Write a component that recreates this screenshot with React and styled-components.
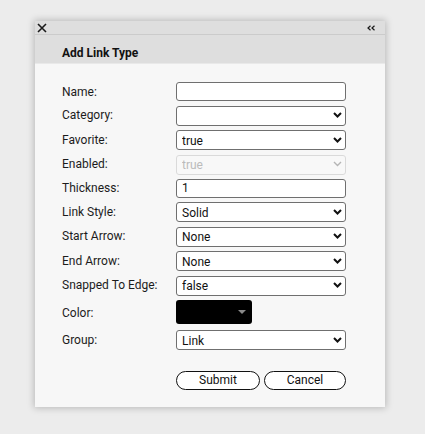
import React from "react";
import styled, { createGlobalStyle } from "styled-components";

const Global = createGlobalStyle`
  html, body { margin: 0; padding: 0; background: #ececec; }
  body { font-family: Roboto, "Liberation Sans", Arial, sans-serif; }
  * { box-sizing: border-box; }
`;

const Page = styled.div`
  width: 425px;
  height: 434px;
  padding: 21px 0 0 35px;
  background: #ececec;
`;

const Dialog = styled.div`
  width: 350px;
  height: 386px;
  display: flex;
  flex-direction: column;
  background: #f7f7f7;
  box-shadow: 0 0 7px 1px rgba(0, 0, 0, 0.22);
`;

const TopBar = styled.div`
  height: 14px;
  flex: none;
  display: flex;
  align-items: center;
  justify-content: space-between;
  padding: 0 10px 0 2px;
  background: #dedede;
  border-bottom: 1px solid #cbcbcb;
`;

const IconButton = styled.button`
  border: 0;
  background: transparent;
  padding: 0;
  margin: 0;
  display: flex;
  align-items: center;
  color: #1a1a1a;
`;

const Header = styled.div`
  height: 29px;
  flex: none;
  display: flex;
  align-items: center;
  padding: 7px 0 0 27px;
  background: #dedede;
  border-bottom: 1px solid #e9e9e9;
`;

const Title = styled.h1`
  margin: 0;
  font-size: 12px;
  font-weight: 700;
  color: #111;
`;

const Body = styled.form`
  flex: 1;
  padding: 18px 39px 0 27px;
  display: flex;
  flex-direction: column;
`;

const Grid = styled.div`
  display: grid;
  grid-template-columns: 114px 170px;
  row-gap: 4.4px;
  align-items: center;
`;

const Label = styled.label`
  font-size: 12px;
  color: #1c1c1c;
`;

const TextInput = styled.input`
  width: 170px;
  height: 19px;
  border: 1px solid #6f6f6f;
  border-radius: 3px;
  background: #fff;
  font-family: inherit;
  font-size: 12px;
  color: #111;
  padding: 0 5px;
  margin: 0;
`;

const SelectWrap = styled.div`
  position: relative;
  width: 170px;
  height: 20px;
`;

const Select = styled.select`
  appearance: none;
  -webkit-appearance: none;
  width: 100%;
  height: 100%;
  border: 1px solid ${(p) => (p.disabled ? "#cfcfcf" : "#6f6f6f")};
  border-radius: 3px;
  background: ${(p) => (p.disabled ? "#f9f9f9" : "#fff")};
  font-family: inherit;
  font-size: 12px;
  color: ${(p) => (p.disabled ? "#a3a3a3" : "#111")};
  padding: 1px 5px 0;
  margin: 0;
  outline: none;
`;

const Chevron = styled.svg`
  position: absolute;
  right: 4px;
  top: 7px;
  pointer-events: none;
`;

const Swatch = styled.div`
  position: relative;
  width: 76px;
  height: 24px;
  margin: 0 0 2px;
  background: #000;
  border-radius: 3px;
`;

const SwatchCaret = styled.span`
  position: absolute;
  right: 6px;
  top: 10px;
  width: 0;
  height: 0;
  border-left: 4px solid transparent;
  border-right: 4px solid transparent;
  border-top: 4px solid #8a8a8a;
`;

const Buttons = styled.div`
  display: flex;
  gap: 4px;
  margin: 21px 0 0 114px;
`;

const PillButton = styled.button`
  width: ${(p) => p.$w}px;
  height: 19px;
  border: 1px solid #111;
  border-radius: 10px;
  background: #fff;
  font-family: inherit;
  font-size: 12px;
  color: #111;
  padding: 0;
`;

const ChevronIcon = ({ disabled }) => (
  <Chevron width="9" height="6" viewBox="0 0 9 6">
    <path
      d="M1 1 L4.5 4.5 L8 1"
      fill="none"
      stroke={disabled ? "#b5b5b5" : "#111"}
      strokeWidth={disabled ? 1.4 : 2}
    />
  </Chevron>
);

const SelectField = ({ value, options, disabled }) => (
  <SelectWrap>
    <Select defaultValue={value} disabled={disabled}>
      {options.map((o) => (
        <option key={o} value={o}>
          {o}
        </option>
      ))}
    </Select>
    <ChevronIcon disabled={disabled} />
  </SelectWrap>
);

const bool = ["true", "false"];
const arrows = ["None", "Arrow", "Triangle"];

export default function App() {
  return (
    <Page>
      <Global />
      <Dialog>
        <TopBar>
          <IconButton aria-label="close">
            <svg width="10" height="10" viewBox="0 0 10 10">
              <path d="M1 1 L9 9 M9 1 L1 9" stroke="#1a1a1a" strokeWidth="1.6" />
            </svg>
          </IconButton>
          <IconButton aria-label="collapse">
            <svg width="8" height="6" viewBox="0 0 8 6">
              <path d="M3.5 0.8 L1 3 L3.5 5.2 M7.5 0.8 L5 3 L7.5 5.2" fill="none" stroke="#1a1a1a" strokeWidth="1.2" />
            </svg>
          </IconButton>
        </TopBar>
        <Header>
          <Title>Add Link Type</Title>
        </Header>
        <Body onSubmit={(e) => e.preventDefault()}>
          <Grid>
            <Label>Name:</Label>
            <TextInput type="text" defaultValue="" />
            <Label>Category:</Label>
            <SelectField value="" options={[""]} />
            <Label>Favorite:</Label>
            <SelectField value="true" options={bool} />
            <Label>Enabled:</Label>
            <SelectField value="true" options={bool} disabled />
            <Label>Thickness:</Label>
            <TextInput type="text" defaultValue="1" />
            <Label>Link Style:</Label>
            <SelectField value="Solid" options={["Solid", "Dashed", "Dotted"]} />
            <Label>Start Arrow:</Label>
            <SelectField value="None" options={arrows} />
            <Label>End Arrow:</Label>
            <SelectField value="None" options={arrows} />
            <Label>Snapped To Edge:</Label>
            <SelectField value="false" options={bool} />
            <Label>Color:</Label>
            <Swatch>
              <SwatchCaret />
            </Swatch>
            <Label>Group:</Label>
            <SelectField value="Link" options={["Link"]} />
          </Grid>
          <Buttons>
            <PillButton $w={84} type="submit">Submit</PillButton>
            <PillButton $w={82} type="button">Cancel</PillButton>
          </Buttons>
        </Body>
      </Dialog>
    </Page>
  );
}
